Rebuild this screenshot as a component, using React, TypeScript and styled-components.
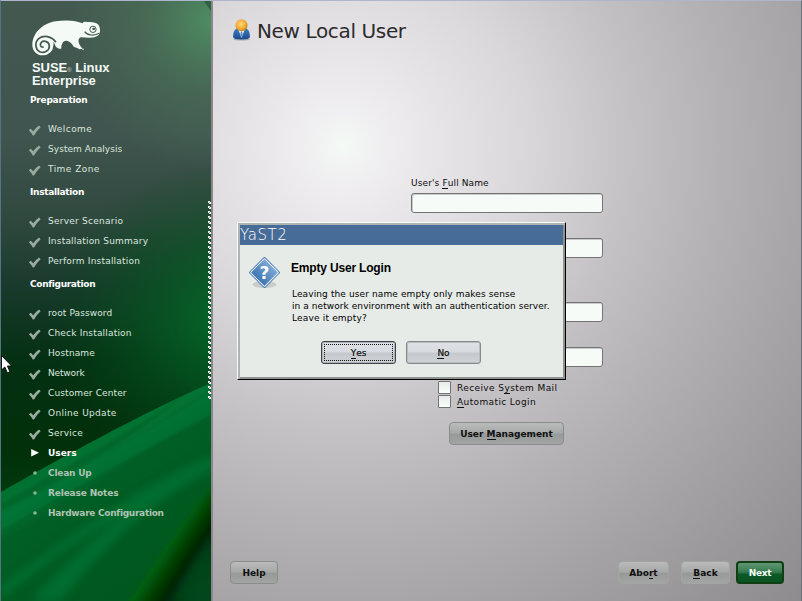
import React from "react";
import styled, { createGlobalStyle, css } from "styled-components";

const GlobalStyle = createGlobalStyle`
  * { box-sizing: border-box; }
  body { margin: 0; background: #999; overflow: hidden; }
`;

const Screen = styled.div`
  position: relative;
  display: flex;
  width: 802px;
  height: 601px;
  overflow: hidden;
  border-top: 1px solid #aeb5cf;
  border-left: 1px solid #55747e;
  border-right: 1px solid #66757f;
  font-family: "DejaVu Sans", sans-serif;
  font-size: 9px;
  line-height: 12px;
  color: #0c0c0c;
  white-space: nowrap;
`;

/* ---------- sidebar ---------- */

const Sidebar = styled.aside`
  display: grid;
  flex: none;
  width: 212px;
  border-right: 2px solid #8b868b;
  overflow: hidden;
  > * { grid-area: 1 / 1; }
`;

const Artwork = styled.svg`
  display: block;
  width: 210px;
  height: 600px;
`;

const Steps = styled.nav`
  display: flex;
  flex-direction: column;
  padding: 19px 0 0 27px;
  z-index: 1;
`;

const Brand = styled.div`
  height: 70px;
  padding-left: 4px;
  color: #f4faf6;
`;

const BrandMark = styled.svg`
  display: block;
  width: 69px;
  height: 36px;
`;

const BrandName = styled.div`
  padding-top: 5px;
  font: bold 13px/13px "Liberation Sans", Arial, sans-serif;
  letter-spacing: -0.05px;
  small { font-size: 6px; line-height: 0; opacity: 0.6; }
`;

const StepGroup = styled.section`
  padding-bottom: 3px;
`;

const GroupTitle = styled.h2<{ $track: number }>`
  margin: 0 0 9px 2px;
  height: 20px;
  font: bold 9px/20px "DejaVu Sans", sans-serif;
  letter-spacing: ${(p) => p.$track}px;
  color: #fff;
`;

type State = "done" | "current" | "todo";

const Step = styled.div<{ $state: State; $track: number }>`
  display: grid;
  grid-template-columns: 20px auto;
  height: 20px;
  line-height: 20px;
  letter-spacing: ${(p) => p.$track}px;
  color: #dce6df;
  ${(p) => p.$state !== "done" && css`font-weight: bold; color: #b1c3b4;`}
  ${(p) => p.$state === "current" && css`color: #fff;`}
`;

const StepIcon = styled.svg`
  display: block;
  width: 14px;
  height: 20px;
`;

const Perforation = styled.svg`
  position: absolute;
  left: 206px;
  top: 199px;
  width: 4px;
  height: 199px;
`;

/* ---------- main panel ---------- */

const Main = styled.main`
  flex: 1;
  display: flex;
  flex-direction: column;
  background: radial-gradient(circle 660px at 130px 145px,
    #f4faf5 0%, #f0eff1 5%, #e8e5e9 14%, #dad7db 28%, #c5c2c6 43%,
    #b5b2b6 57%, #a6a3a7 72%, #979498 88%, #8d8a8e 100%);
`;

const Header = styled.header`
  display: flex;
  align-items: center;
  gap: 6px;
  height: 60px;
  padding-left: 19px;
`;

const UserIcon = styled.svg`
  display: block;
  width: 19px;
  height: 24px;
`;

const Title = styled.h1`
  margin: 0;
  font: normal 20px/24px "DejaVu Sans", sans-serif;
  letter-spacing: -0.36px;
  color: #2b2b2d;
`;

const Form = styled.form`
  display: flex;
  flex-direction: column;
  width: 192px;
  margin: 116px 0 0 198px;
`;

const Label = styled.label<{ $track?: number }>`
  height: 12px;
  letter-spacing: ${(p) => p.$track ?? 0}px;
`;

const Field = styled.div<{ $gap: number }>`
  height: 20px;
  margin-top: ${(p) => p.$gap}px;
  background: #f6fbf7;
  border: 1px solid #737375;
  border-radius: 3px;
  box-shadow: inset 1px 1px 0 #c9ccca;
`;

const Options = styled.div`
  display: grid;
  gap: 1px;
  margin: 14px 0 0 27px;
`;

const Option = styled.div<{ $track: number }>`
  display: flex;
  align-items: center;
  gap: 6px;
  height: 13px;
  letter-spacing: ${(p) => p.$track}px;
`;

const Box = styled.span`
  width: 13px;
  height: 13px;
  border: 1px solid #727274;
  border-radius: 1px;
  background: linear-gradient(#e7ebe8, #fbfffc);
`;

const Key = styled.u`
  text-decoration: none;
  box-shadow: 0 1px 0 currentColor;
  display: inline-block;
  height: 11px;
  line-height: 12px;
`;

const Button = styled.button<{ $w: number; $kind?: "next" | "light" | "focused"; $outline?: boolean }>`
  display: grid;
  place-items: center;
  width: ${(p) => p.$w}px;
  height: 23px;
  padding: 0;
  border: 1px solid ${(p) => (p.$outline ? "#8b8d8c" : "#a3a5a4")};
  border-radius: 4px;
  background: linear-gradient(#b9bcba, #a5a8a6 49%, #959997 52%, #a2a5a3);
  color: #101010;
  font: bold 9px/12px "DejaVu Sans", sans-serif;
  ${(p) => p.$kind === "next" && css`
    border: 2px solid #123e14;
    background: linear-gradient(#5f9873, #37794e 48%, #0d5826 60%, #0b5423);
    color: #f3fff6;
    letter-spacing: -0.3px;
  `}
  ${(p) => (p.$kind === "light" || p.$kind === "focused") && css`
    border: 1px solid #858988;
    border-radius: 3px;
    background: linear-gradient(#dfe1e6, #d7dae0 48%, #c5c9cd 53%, #cfd2d5);
    box-shadow: inset 0 0 0 1px #b9bdc0;
    font-weight: normal;
    -webkit-text-stroke: 0.2px #101010;
  `}
  ${(p) => p.$kind === "focused" && css`
    border-color: #3e4145;
    box-shadow: inset 0 0 0 1px #b0b4b8;
  `}
`;

const FocusRing = styled.span`
  display: grid;
  place-items: center;
  width: 69px;
  height: 17px;
  border: 1px dotted #111;
`;

const Manage = styled.div`
  margin: 14px 0 0 38px;
  letter-spacing: 0;
`;

const Footer = styled.footer`
  display: flex;
  align-items: center;
  margin-top: auto;
  height: 23px;
  margin-bottom: 17px;
  padding: 0 17px 0 17px;
`;

const Spacer = styled.span<{ $w?: number }>`
  ${(p) => (p.$w ? `width: ${p.$w}px;` : "flex: 1;")}
`;

/* ---------- dialog ---------- */

const Dialog = styled.div`
  position: absolute;
  left: 236px;
  top: 221px;
  width: 329px;
  height: 158px;
  border: 1px solid;
  border-color: #f8fbf9 #000 #000 #f8fbf9;
  background: #e7ebe8;
  box-shadow: inset 1px 1px 0 1px #aeb4b1, inset -1px -1px 0 1px #8e9391;
  padding: 2px;
`;

const DialogTitle = styled.div`
  height: 20px;
  background: #486c98;
  color: #fff;
  font: 200 15px/20px "DejaVu Sans", sans-serif;
  letter-spacing: 0.55px;
`;

const DialogBody = styled.div`
  display: grid;
  grid-template-columns: 45px auto;
  padding: 10px 0 0 7px;
`;

const DialogIcon = styled.svg`
  display: block;
  width: 35px;
  height: 37px;
`;

const DialogHeading = styled.h3`
  margin: 6px 0 13px -1px;
  font: bold 12px/14px "Liberation Sans", Arial, sans-serif;
  letter-spacing: -0.18px;
  color: #000;
`;

const Line = styled.div<{ $track: number }>`
  letter-spacing: ${(p) => p.$track}px;
  color: #000;
`;

const DialogButtons = styled.div`
  display: flex;
  gap: 10px;
  margin: 17px 0 0 81px;
`;

const Cursor = styled.svg`
  position: absolute;
  left: 0;
  top: 353px;
  width: 13px;
  height: 20px;
`;

const groups: { title: string; track: number; steps: [string, State, number][] }[] = [
  { title: "Preparation", track: -0.25, steps: [
    ["Welcome", "done", 0.45], ["System Analysis", "done", 0.05], ["Time Zone", "done", 0.45]] },
  { title: "Installation", track: -0.3, steps: [
    ["Server Scenario", "done", 0.25], ["Installation Summary", "done", 0.2], ["Perform Installation", "done", 0.2]] },
  { title: "Configuration", track: -0.33, steps: [
    ["root Password", "done", 0.1], ["Check Installation", "done", 0.18], ["Hostname", "done", 0.1],
    ["Network", "done", -0.15], ["Customer Center", "done", 0.12], ["Online Update", "done", 0.32],
    ["Service", "done", 0.25], ["Users", "current", 0], ["Clean Up", "todo", -0.2],
    ["Release Notes", "todo", -0.15], ["Hardware Configuration", "todo", -0.29]] },
];

function Mark({ state }: { state: State }) {
  return (
    <StepIcon viewBox="0 0 14 20">
      {state === "done" && <path d="M0.8 11.2 L2.8 9.8 L5.2 12.2 Q7.8 8.9 11 6.6 L12.6 8.2 Q9 11.4 6 16.4 L4.8 16.4 Q3 13.2 0.8 11.2Z" fill="#99aa9f" />}
      {state === "current" && <path d="M3.2 6 L11 9.8 L3.2 13.6Z" fill="#fff" />}
      {state === "todo" && <circle cx="7" cy="10" r="1.8" fill="#83b794" />}
    </StepIcon>
  );
}

function Chameleon() {
  return (
    <BrandMark viewBox="96 61 207 108" preserveAspectRatio="none">
      <path
        d="M248 71 C250 65 256 66 262 67 C276 66 290 68 295 75 C302 85 301 100 296 106 C282 118 262 113 242 113
           C236 116 233 122 238 134 Q242 142 248 147 L238 149 L232 145 L222 142 C216 134 212 127 203 124
           C196 122 190 124 187 131 Q183 138 184 147 L177 147 L168 142 C165 136 163 130 161 126
           L160 138 A30.5 30.5 0 0 1 129 167 C110 168 97 154 97 136 C97 104 124 72 166 65 C198 60 228 62 248 71Z"
        fill="#f4faf6"
      />
      <path d="M168 128 C154 108 130 106 116 117 C103 129 106 149 119 156 C133 162 149 153 148 138 C147 126 132 121 124 128 C118 135 122 144 131 142" fill="none" stroke="#44594f" strokeWidth="5" />
      <path d="M254 96 C262 108 282 109 298 101" fill="none" stroke="#44594f" strokeWidth="3.5" />
      <circle cx="279" cy="89" r="9.5" fill="none" stroke="#44594f" strokeWidth="3" />
      <ellipse cx="281" cy="88" rx="4.5" ry="3.5" fill="#44594f" />
      <circle cx="249" cy="149" r="2.5" fill="#dce6df" />
    </BrandMark>
  );
}

function SidebarArt() {
  return (
    <Artwork viewBox="0 0 210 600" preserveAspectRatio="none">
      <defs>
        <linearGradient id="base" x1="0" y1="0" x2="0" y2="1">
          <stop offset="0" stopColor="#43584f" />
          <stop offset="0.22" stopColor="#40554f" />
          <stop offset="0.36" stopColor="#30493f" />
          <stop offset="0.48" stopColor="#18392b" />
          <stop offset="0.6" stopColor="#043013" />
          <stop offset="0.75" stopColor="#013009" />
          <stop offset="1" stopColor="#00531c" />
        </linearGradient>
        <radialGradient id="topGlow" gradientUnits="userSpaceOnUse" cx="212" cy="20" r="150">
          <stop offset="0" stopColor="#4f9464" stopOpacity="0.9" />
          <stop offset="0.5" stopColor="#4b7659" stopOpacity="0.5" />
          <stop offset="1" stopColor="#4b7659" stopOpacity="0" />
        </radialGradient>
        <radialGradient id="midGlow" gradientUnits="userSpaceOnUse" cx="0" cy="0" r="1" gradientTransform="translate(235 320) scale(190 160)">
          <stop offset="0" stopColor="#04702a" stopOpacity="0.95" />
          <stop offset="0.45" stopColor="#045c22" stopOpacity="0.6" />
          <stop offset="1" stopColor="#024a18" stopOpacity="0" />
        </radialGradient>
        <linearGradient id="wave" gradientUnits="userSpaceOnUse" x1="60" y1="455" x2="150" y2="600">
          <stop offset="0" stopColor="#01702f" />
          <stop offset="0.1" stopColor="#037434" />
          <stop offset="0.25" stopColor="#015f25" />
          <stop offset="0.55" stopColor="#005a20" />
          <stop offset="1" stopColor="#00571e" />
        </linearGradient>
        <linearGradient id="shade" gradientUnits="userSpaceOnUse" x1="148" y1="556" x2="200" y2="590">
          <stop offset="0" stopColor="#006012" />
          <stop offset="0.13" stopColor="#00650a" />
          <stop offset="0.42" stopColor="#003804" />
          <stop offset="0.58" stopColor="#002406" />
          <stop offset="1" stopColor="#00451a" />
        </linearGradient>
        <filter id="soft"><feGaussianBlur stdDeviation="4" /></filter>
        <filter id="soft2"><feGaussianBlur stdDeviation="1" /></filter>
      </defs>
      <rect width="210" height="600" fill="url(#base)" />
      <rect width="210" height="200" fill="url(#topGlow)" />
      <rect y="150" width="210" height="340" fill="url(#midGlow)" />
      <path d="M203 0H210V10Z" fill="#2c6040" />
      <path d="M0 491 C50 462 145 410 210 382 V600 H0Z" fill="url(#wave)" />
      <path d="M0 515 C70 475 150 430 210 392 V414 C150 445 60 495 0 529Z" fill="#01793a" opacity="0.5" filter="url(#soft2)" />
      <path d="M0 503 C60 468 130 430 182 396 C130 438 60 480 0 510Z" fill="#00501e" opacity="0.35" filter="url(#soft2)" />
      <path d="M0 585 C60 540 150 478 214 454 V466 C160 495 110 535 60 600 H30 C70 555 110 525 130 510 C80 535 40 565 0 598Z" fill="#038040" opacity="0.5" filter="url(#soft)" />
      <path d="M212 484 C187 512 157 560 127 602 H212Z" fill="url(#shade)" filter="url(#soft2)" />
      <path d="M212 535 C195 555 180 580 172 602 H212Z" fill="#004a1a" opacity="0.7" filter="url(#soft)" />
    </Artwork>
  );
}

export default function App() {
  return (
    <>
      <GlobalStyle />
      <Screen>
        <Sidebar>
          <SidebarArt />
          <Steps>
            <Brand>
              <Chameleon />
              <BrandName>SUSE<small>®</small> Linux<br />Enterprise</BrandName>
            </Brand>
            {groups.map((g) => (
              <StepGroup key={g.title}>
                <GroupTitle $track={g.track}>{g.title}</GroupTitle>
                {g.steps.map(([name, state, track]) => (
                  <Step key={name} $state={state} $track={track}>
                    <Mark state={state} />
                    {name}
                  </Step>
                ))}
              </StepGroup>
            ))}
          </Steps>
        </Sidebar>
        <Main>
          <Header>
            <UserIcon viewBox="0 0 19 24">
              <defs>
                <radialGradient id="head" cx="0.45" cy="0.4" r="0.6"><stop offset="0" stopColor="#ffd87c" /><stop offset="0.6" stopColor="#f5b03a" /><stop offset="1" stopColor="#c98316" /></radialGradient>
                <linearGradient id="suit" x1="0" y1="0" x2="0" y2="1"><stop offset="0" stopColor="#3f7fc4" /><stop offset="1" stopColor="#1c4a8c" /></linearGradient>
              </defs>
              <ellipse cx="9.5" cy="20.2" rx="8.3" ry="1.4" fill="#777" opacity="0.5" />
              <path d="M1 18 Q1 10 6 9 H13 Q18 10 18 18 Q17.5 20.5 9.5 20.5 Q1.5 20.5 1 18Z" fill="url(#suit)" />
              <path d="M6.5 11 H12.5 L9.5 19Z" fill="#edf3fa" />
              <path d="M8.9 12.5 H10.1 L10.6 15.5 L9.5 18 L8.4 15.5Z" fill="#4f86c2" />
              <circle cx="9.5" cy="6.2" r="6" fill="url(#head)" />
            </UserIcon>
            <Title>New Local User</Title>
          </Header>
          <Form>
            <Label $track={0.12}>User's <Key>F</Key>ull Name</Label>
            <Field $gap={4} />
            <Field $gap={25} />
            <Field $gap={44} />
            <Field $gap={25} />
            <Options>
              <Option $track={0.4}><Box /><span>Receive S<Key>y</Key>stem Mail</span></Option>
              <Option $track={0.38}><Box /><span><Key>A</Key>utomatic Login</span></Option>
            </Options>
            <Manage>
              <Button type="button" $w={115} $outline><span>User <Key>M</Key>anagement</span></Button>
            </Manage>
          </Form>
          <Footer>
            <Button $w={48} $outline>Help</Button>
            <Spacer />
            <Button $w={51}><span>Abo<Key>r</Key>t</span></Button>
            <Spacer $w={12} />
            <Button $w={49}><span><Key>B</Key>ack</span></Button>
            <Spacer $w={6} />
            <Button $w={48} $kind="next">Next</Button>
          </Footer>
        </Main>
        <Perforation>
          <defs>
            <pattern id="dots" width="4" height="5" patternUnits="userSpaceOnUse">
              <rect x="1" y="1" width="2" height="2" fill="#e8f3ea" />
              <rect x="2" y="2" width="2" height="2" fill="#fff" />
              <rect x="2" y="2" width="1" height="1" fill="#9db5a3" />
            </pattern>
          </defs>
          <rect width="4" height="199" fill="url(#dots)" />
        </Perforation>
        <Dialog>
          <DialogTitle>YaST2</DialogTitle>
          <DialogBody>
            <DialogIcon viewBox="0 0 35 37">
              <defs><linearGradient id="dia" x1="0" y1="0" x2="0" y2="1"><stop offset="0" stopColor="#7fa9d6" /><stop offset="1" stopColor="#3d74b1" /></linearGradient></defs>
              <ellipse cx="17.5" cy="29.5" rx="12" ry="3.5" fill="#aab0ae" opacity="0.5" />
              <rect x="6.2" y="6.2" width="22.6" height="22.6" rx="1.5" transform="rotate(45 17.5 17.5)" fill="#4677b1" />
              <rect x="7.5" y="7.5" width="20" height="20" rx="1" transform="rotate(45 17.5 17.5)" fill="url(#dia)" stroke="#e9f1fa" strokeWidth="1" />
              <text x="17.5" y="23.5" textAnchor="middle" fontFamily="DejaVu Sans, sans-serif" fontWeight="bold" fontSize="17" fill="#fff">?</text>
            </DialogIcon>
            <div>
              <DialogHeading>Empty User Login</DialogHeading>
              <Line $track={0.11}>Leaving the user name empty only makes sense</Line>
              <Line $track={0.07}>in a network environment with an authentication server.</Line>
              <Line $track={0.18}>Leave it empty?</Line>
            </div>
          </DialogBody>
          <DialogButtons>
            <Button $w={75} $kind="focused"><FocusRing><span><Key>Y</Key>es</span></FocusRing></Button>
            <Button $w={75} $kind="light"><span><Key>N</Key>o</span></Button>
          </DialogButtons>
        </Dialog>
        <Cursor viewBox="0 0 13 20">
          <path d="M0.5 1.5 V16 L3.8 13 L6.4 19 L9 18 L6.4 12 H10.6Z" fill="#fff" stroke="#111" strokeWidth="1" />
        </Cursor>
      </Screen>
    </>
  );
}
